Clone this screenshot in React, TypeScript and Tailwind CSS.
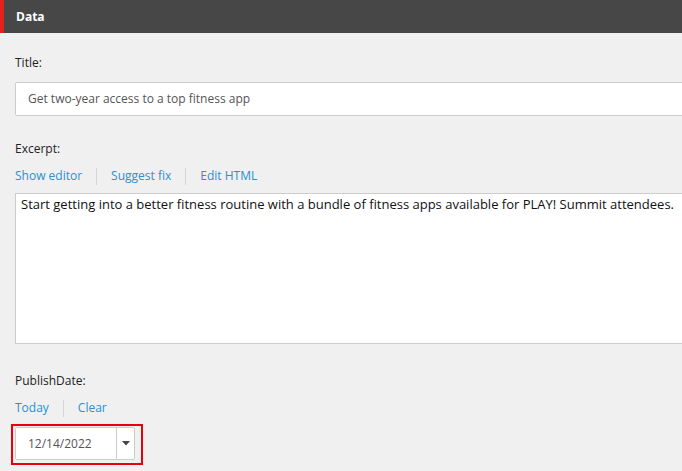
export default function App() {
  return (
    <div className="h-[471px] w-[682px] overflow-hidden bg-[#f0f0f0] font-['Open_Sans',sans-serif] text-[12px] text-[#333]">
      <div className="flex h-[33px] items-center border-l-[4px] border-[#e3231b] bg-[#474747] pl-[12px]">
        <span className="text-[12px] font-bold text-white">Data</span>
      </div>

      <div className="pl-[15px]">
        <div className="pt-[21px] text-[#222]">Title:</div>
        <div className="mt-[10px] flex h-[34px] w-[700px] items-center rounded-[2px] border border-[#cccccc] bg-white pl-[12px] text-[#555]">
          Get two-year access to a top fitness app
        </div>

        <div className="pt-[24px] text-[#222]">Excerpt:</div>
        <div className="mt-[9px] flex items-center text-[#2b8fd0]">
          <span>Show editor</span>
          <span className="mx-[14px] h-[17px] w-px bg-[#d5d5d5]" />
          <span>Suggest fix</span>
          <span className="mx-[14px] h-[17px] w-px bg-[#d5d5d5]" />
          <span>Edit HTML</span>
        </div>
        <div className="mt-[8px] h-[151px] w-[700px] border border-[#cccccc] bg-white px-[5px] text-[13px] leading-[20px] text-[#111]">
          Start getting into a better fitness routine with a bundle of fitness apps available for PLAY! Summit attendees.
        </div>

        <div className="pt-[28px] text-[#222]">PublishDate:</div>
        <div className="mt-[9px] flex items-center text-[#2b8fd0]">
          <span>Today</span>
          <span className="mx-[14px] h-[17px] w-px bg-[#d5d5d5]" />
          <span>Clear</span>
        </div>
        <div className="ml-[-4px] mt-[7px] h-[41px] w-[132px] border-2 border-[#e8000b] pl-[2px] pt-[1px]">
          <div className="flex h-[33px] w-[120px] rounded-[2px] border border-[#cccccc] bg-white">
            <div className="flex flex-1 items-center pl-[12px] text-[12px] text-[#555]">12/14/2022</div>
            <div className="flex w-[18px] items-center justify-center border-l border-[#cccccc]">
              <svg width="8" height="5" viewBox="0 0 8 5">
                <path d="M0 0h8L4 4.5z" fill="#444" />
              </svg>
            </div>
          </div>
        </div>
      </div>
    </div>
  );
}
